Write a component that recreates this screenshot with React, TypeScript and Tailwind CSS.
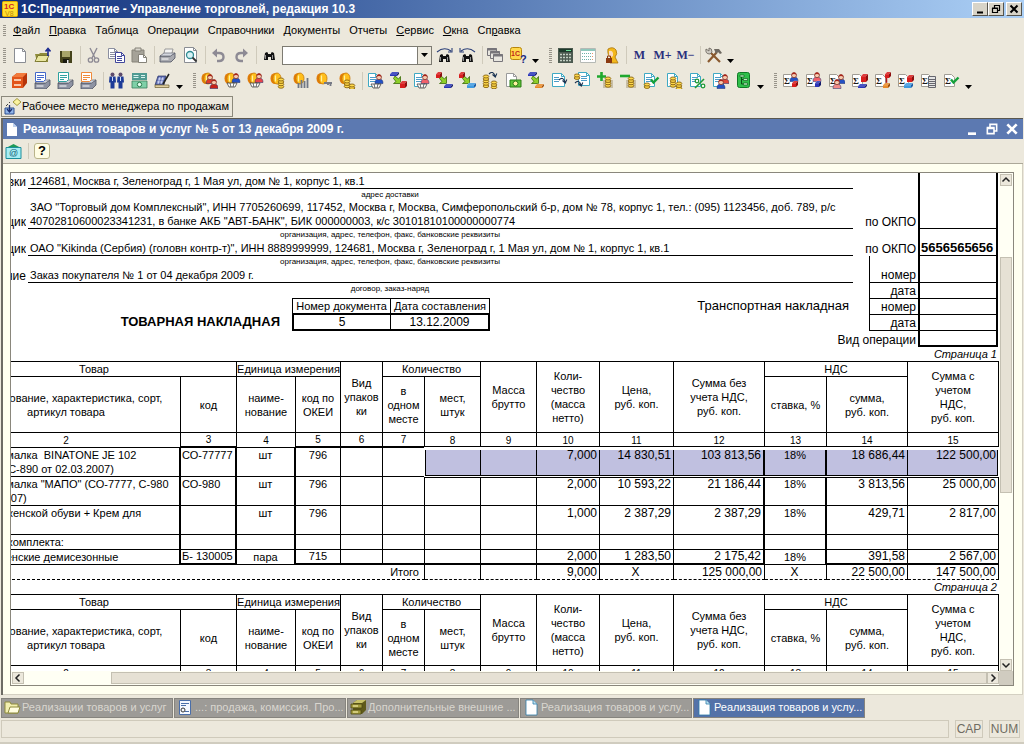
import type { ReactNode } from "react";
import { clsx } from "clsx";

/* ---------- icon parts ---------- */

function Icon({ children }: { children: ReactNode }) {
    return (
        <svg viewBox="0 0 17 17" className="w-[17px] h-[17px] shrink-0" aria-hidden="true">
            {children}
        </svg>
    );
}

function Sheet({ x = 1, y = 1, w = 11, h = 14, c = "#3fa9c4" }) {
    return (
        <g>
            <path d={`M${x + 0.5} ${y + 0.5}h${w - 4}l3 3v${h - 4}h${-(w - 1)}z`} fill="#fff" stroke={c} />
            <path d={`M${x + w - 3.5} ${y + 0.5}v3h3`} fill="none" stroke={c} />
        </g>
    );
}

function Lines({ x = 3, y = 5, w = 6, n = 3, c = "#4d9cc8" }) {
    let d = "";
    for (let i = 0; i < n; i++) d += `M${x} ${y + i * 2 + 0.5}h${w}`;
    return <path d={d} stroke={c} />;
}

function Person({ x = 0, y = 0, c = "#2451c4" }) {
    return (
        <g transform={`translate(${x} ${y})`}>
            <path d="M0 9.500c0-3.500 1.500-4.500 4-4.500s4 1 4 4.500z" fill={c} stroke="#1b2a6b" strokeWidth="0.500" />
            <circle cx="4" cy="3.200" r="2.500" fill="#f6c9ae" stroke="#7a2318" strokeWidth="0.700" />
            <path d="M1.500 3q0.500-2.800 2.500-2.800t2.500 2.800q-2.500-1.800-5 0z" fill="#a8241a" />
        </g>
    );
}

function Coin({ x = 0, y = 0 }) {
    return <ellipse cx={x + 3} cy={y + 1.5} rx="2.800" ry="1.500" fill="#ffd94a" stroke="#8a6410" strokeWidth="0.900" />;
}

function Coins({ x = 0, y = 0, n = 3 }) {
    return (
        <g>
            {Array.from({ length: n }, (_, i) => (
                <Coin key={i} x={x} y={y + (n - 1 - i) * 2.4} />
            ))}
        </g>
    );
}

function BigCoin() {
    return (
        <g>
            <ellipse cx="5" cy="6.500" rx="4.500" ry="5.500" fill="#e07c08" />
            <ellipse cx="7" cy="6.500" rx="4" ry="5.500" fill="#ffbf1c" stroke="#c77808" strokeWidth="0.800" />
            <path d="M5.500 3.500v6" stroke="#fff0a0" strokeWidth="1.200" />
        </g>
    );
}

function Cube({ x = 0, y = 0, w = 6, h = 6, c = "#d81e1e", d = "#8c0f0f" }) {
    return (
        <g transform={`translate(${x} ${y})`}>
            <path d={`M0 2h${w - 2}v${h - 2}h${-(w - 2)}z`} fill={c} />
            <path d={`M0 2l2-2h${w - 2}l-2 2z`} fill={c} stroke="#fff" strokeWidth="0.300" />
            <path d={`M${w - 2} 2l2-2v${h - 2}l-2 2z`} fill={d} />
        </g>
    );
}

function Cart({ x = 0, y = 0 }) {
    return (
        <path
            d={`M${x} ${y}h10l-2 4h-6zM${x + 3} ${y}l1 4M${x + 7} ${y}l-1 4`}
            fill="#fff"
            stroke="#444"
            strokeWidth="0.800"
        />
    );
}

function GreenArrow() {
    return <path d="M5 4l3.500 3 2-2.500v7h-7l2.500-2-2.500-3z" fill="#8ed02a" stroke="#3b6b0a" strokeWidth="0.800" />;
}

function Check({ x = 0, y = 0 }) {
    return <path d={`M${x} ${y + 2.5}l2.500 3 5-5`} fill="none" stroke="#15a03a" strokeWidth="2.400" />;
}

function Turn({ x = 0, y = 0 }) {
    return <path d={`M${x} ${y + 2}q4-4 6 2M${x + 3.5} ${y + 2.5}l2.800 2.500 1.500-3.500`} fill="none" stroke="#1c3452" strokeWidth="1.100" />;
}

function PrinterBody({ y = 9, c = "#8e93a3" }) {
    return (
        <g>
            <path d={`M1 ${y}h10l5-3v5l-4 4h-11z`} fill={c} stroke="#4d5160" strokeWidth="0.800" />
            <path d={`M1 ${y}l4-3h11l-4.500 3z`} fill="#d4d7df" stroke="#4d5160" strokeWidth="0.600" />
            <path d={`M2.500 ${y + 3}h7`} stroke="#fff" />
        </g>
    );
}

function PagePrinter({ c }: { c: string }) {
    return (
        <Icon>
            <PrinterBody y={11} />
            <path d="M1.500 0.500h10v7l-2 2h-8z" fill="#fff" stroke={c} />
            <path d="M3 3.500h7M3 5.500h7M3 7.500h4" stroke={c} />
        </Icon>
    );
}

function SigmaSheet() {
    return (
        <g>
            <path d="M1.500 2.500h7l3 3v9h-10z" fill="#fff" stroke="#a09c94" />
            <text x="2" y="12" fontSize="9" fontWeight="700" fontFamily="Liberation Serif" fill="#1a1a1a">
                Σ
            </text>
        </g>
    );
}

function Binoculars({ dx = 0, dy = 0 }) {
    return (
        <g transform={`translate(${dx} ${dy})`} fill="#111">
            <path d="M3 5l2-1 1 1v7h-4zM12 5l-2-1-1 1v7h4z" />
            <path d="M6 6h3v3h-3z" />
            <path d="M3.500 7v4M10.500 7v4" stroke="#b8b8b8" strokeWidth="0.800" />
        </g>
    );
}

/* ---------- toolbar content ---------- */

type Item = { label: string; icon: ReactNode } | "sep" | "more" | "grip" | "combo";

const gray = "#8d8a94";

const mainBar: Item[] = [
    "grip",
    { label: "Новый", icon: <Icon><Sheet x={3} y={1} w={12} h={15} c="#8a8d93" /></Icon> },
    {
        label: "Открыть",
        icon: (
            <Icon>
                <path d="M1 7h4l1-1h8v9h-11z" fill="#8f8c3a" />
                <path d="M1 14.500l3-6h11l-3 6z" fill="#e9e6a0" stroke="#6d6a20" strokeWidth="0.800" />
                <path d="M14 9v-6M11.500 4.500l2.500-3 2.500 3" fill="none" stroke="#1b2a8f" strokeWidth="1.600" />
            </Icon>
        ),
    },
    {
        label: "Сохранить",
        icon: (
            <Icon>
                <path d="M3 4h12v12h-11l-1-1z" fill="#45431c" />
                <path d="M5 4h8v6h-8z" fill="#a8a56a" />
                <path d="M6 12h6v4h-6z" fill="#1a1a10" />
                <path d="M10 13h1.500v3h-1.500z" fill="#eee" />
            </Icon>
        ),
    },
    "sep",
    {
        label: "Вырезать",
        icon: (
            <Icon>
                <path d="M5 1l5 10M12 1l-5 10" stroke={gray} strokeWidth="1.400" />
                <circle cx="5.500" cy="13" r="2.200" fill="none" stroke={gray} strokeWidth="1.300" />
                <circle cx="11.500" cy="13" r="2.200" fill="none" stroke={gray} strokeWidth="1.300" />
            </Icon>
        ),
    },
    {
        label: "Копировать",
        icon: (
            <Icon>
                <Sheet x={0} y={1} w={10} h={11} c="#8b8fa0" />
                <Lines x={2} y={5} w={5} n={3} c="#8b8fa0" />
                <Sheet x={7} y={5} w={10} h={11} c="#41479c" />
                <Lines x={9} y={9} w={5} n={3} c="#41479c" />
            </Icon>
        ),
    },
    {
        label: "Вставить",
        icon: (
            <Icon>
                <path d="M1 3h12v12h-12z" fill="#a5a298" stroke="#858278" />
                <path d="M4 1h6v3h-6z" fill="#d8d5cc" stroke="#858278" />
                <Sheet x={7} y={7} w={9} h={9} c="#858278" />
            </Icon>
        ),
    },
    "sep",
    { label: "Печать", icon: <Icon><path d="M5 6l1-4h8l-1 4" fill="#f4f4f4" stroke="#999" /><PrinterBody y={9} c="#a9aab0" /></Icon> },
    {
        label: "Просмотр",
        icon: (
            <Icon>
                <Sheet x={2} y={0} w={13} h={16} c="#8a8d93" />
                <circle cx="8" cy="8" r="3.500" fill="#d7f2f5" stroke="#2f8b92" strokeWidth="1.300" />
                <path d="M10.500 10.500l4 4" stroke="#333" strokeWidth="1.800" />
            </Icon>
        ),
    },
    "sep",
    {
        label: "Отменить",
        icon: (
            <Icon>
                <path d="M4 6h5q4.500 0 4.500 4t-4.500 4h-2" fill="none" stroke={gray} strokeWidth="2.400" />
                <path d="M2 6l5-4.500v9z" fill={gray} />
            </Icon>
        ),
    },
    {
        label: "Повторить",
        icon: (
            <Icon>
                <path d="M13 6h-5q-4.500 0-4.500 4t4.500 4h2" fill="none" stroke={gray} strokeWidth="2.400" />
                <path d="M15 6l-5-4.500v9z" fill={gray} />
            </Icon>
        ),
    },
    "sep",
    { label: "Найти", icon: <Icon><Binoculars dx={1} dy={1} /></Icon> },
    "combo",
    {
        label: "Найти далее",
        icon: (
            <Icon>
                <Binoculars dx={1} dy={3} />
                <path d="M1 5q7-6 14-1M12 5h4v-4" fill="none" stroke="#2b3f78" strokeWidth="1.100" />
            </Icon>
        ),
    },
    {
        label: "Найти ранее",
        icon: (
            <Icon>
                <Binoculars dx={1} dy={3} />
                <path d="M16 5q-7-6-14-1M5 5h-4v-4" fill="none" stroke="#2b3f78" strokeWidth="1.100" />
            </Icon>
        ),
    },
    "sep",
    {
        label: "Окна",
        icon: (
            <Icon>
                {[0, 3, 6].map((n) => (
                    <g key={n}>
                        <path d={`M${n + 0.5} ${n + 1.5}h9v7h-9z`} fill="#e8e6e0" stroke="#77757a" />
                        <path d={`M${n} ${n + 2.5}h10`} stroke="#77757a" strokeWidth="2" />
                    </g>
                ))}
            </Icon>
        ),
    },
    {
        label: "Справка",
        icon: (
            <Icon>
                <rect x="0.500" y="0.500" width="11" height="12" rx="2" fill="#ffd84a" stroke="#b8860b" />
                <text x="1" y="9" fontSize="7" fontWeight="700" fontFamily="Liberation Sans" fill="#c0261a">1C</text>
                <text x="10" y="16" fontSize="11" fontWeight="700" fontFamily="Liberation Sans" fill="#1b2a7f">?</text>
            </Icon>
        ),
    },
    "more",
    "grip",
    {
        label: "Калькулятор",
        icon: (
            <Icon>
                <path d="M1 1h15v15h-15z" fill="#4c5a50" />
                <path d="M2 2h13v3h-13z" fill="#1e3b2c" />
                <path d="M3 7.500h11M3 10.500h11M3 13.500h11" stroke="#c4d0c4" strokeWidth="1.600" strokeDasharray="2 1" />
                <path d="M9 3.500h5" stroke="#6fe09a" />
            </Icon>
        ),
    },
    {
        label: "Календарь",
        icon: (
            <Icon>
                <path d="M0.500 1.500h15v14h-15z" fill="#fff" stroke="#b5b9b5" />
                <path d="M1 3h14" stroke="#8fc7bb" strokeWidth="2" />
                <path d="M2 6.500h12M2 9.500h12M2 12.500h12" stroke="#6fb0a8" strokeDasharray="1 1" />
                <path d="M12.500 6v8" stroke="#e59a6a" strokeDasharray="1 2" />
            </Icon>
        ),
    },
    {
        label: "Пользователи",
        icon: (
            <Icon>
                <path d="M5 2q5-3 8 1 2 4-1 7l3 6h-8l1-5q-4-3-3-9z" fill="#f3b81c" stroke="#a8730a" strokeWidth="0.800" />
                <path d="M6 4q3-1 4 2v3q-2 2-4 0z" fill="#fbdcc0" />
                <path d="M3 11h6v5h-6z" fill="#8a3a12" />
                <path d="M4.500 11v-2h3v2" fill="none" stroke="#8a3a12" />
            </Icon>
        ),
    },
    "sep",
    { label: "Память", icon: "M" },
    { label: "Память плюс", icon: "M+" },
    { label: "Память минус", icon: "M−" },
    "sep",
    {
        label: "Настройка",
        icon: (
            <Icon>
                <path d="M3 15l9-10M15 15l-9-9" stroke="#8a5a30" strokeWidth="2.200" />
                <path d="M9 2l5 0 3 4-2 1-2-2-2 2z" fill="#6f6a62" />
                <path d="M1 2q-1 5 4 5l2-2q0-4-3-4v3z" fill="#cfccc4" stroke="#6f6a62" strokeWidth="0.900" />
            </Icon>
        ),
    },
    "more",
];

const tradeBar: Item[] = [
    "grip",
    {
        label: "Справочник",
        icon: (
            <Icon>
                <path d="M1 5l5-4h10v10l-4 5h-11z" fill="#b6340a" />
                <path d="M1 5l5-4h10l-4 4z" fill="#f27a3c" />
                <path d="M1 5h11v11h-11z" fill="#e2551a" />
                <path d="M3 8h7M3 13h7" stroke="#fff0dc" strokeWidth="1.500" />
            </Icon>
        ),
    },
    { label: "Печать ценников", icon: <PagePrinter c="#4468c9" /> },
    { label: "Печать этикеток", icon: <PagePrinter c="#2fa3a0" /> },
    { label: "Печать чеков", icon: <PagePrinter c="#ef8a3a" /> },
    "sep",
    {
        label: "Контрагенты",
        icon: (
            <Icon>
                <path d="M1.500 4.500h6l0.500 6h-1.500v6h-4v-6h-1.500zM9.500 4.500h6l0.500 6h-1.500v6h-4v-6h-1.500z" fill="#1d3b98" />
                <circle cx="4.500" cy="2.500" r="2" fill="#5c4a6c" />
                <circle cx="12.500" cy="2.500" r="2" fill="#5c4a6c" />
                <path d="M4.500 5v4M12.500 5v4" stroke="#cfe0ff" />
            </Icon>
        ),
    },
    {
        label: "Номенклатура",
        icon: (
            <Icon>
                <path d="M1 1h15v7h-15z" fill="#4f9a92" />
                <path d="M2.500 3.500h5M2.500 5.500h5M10 3.500h4M10 5.500h4" stroke="#d8f2ee" />
                <path d="M1 9h15v7h-15z" fill="#7fd0a8" stroke="#3b7d5c" strokeWidth="0.800" />
                <ellipse cx="8.500" cy="12.500" rx="2.200" ry="2.200" fill="#e7fff2" stroke="#2c7a4c" />
            </Icon>
        ),
    },
    {
        label: "Ввод остатков",
        icon: (
            <Icon>
                <path d="M1 13l3-9h8l-2 9z" fill="#5b6bb0" stroke="#2c3568" strokeWidth="0.700" />
                <path d="M3 10h6M4 7h6M6 5l-2 7M9 5l-2 7" stroke="#dfe4ff" strokeWidth="0.800" />
                <path d="M1 13h14v2.500h-14z" fill="#e0cfa0" stroke="#6d5f30" strokeWidth="0.700" />
                <path d="M9 12l6-10" stroke="#222" strokeWidth="1.500" />
            </Icon>
        ),
    },
    "more",
    "grip",
    { label: "Покупатели", icon: <Icon><BigCoin /><Person x={5} y={2} c="#e03a2a" /><Person x={9} y={7} c="#c8221a" /></Icon> },
    { label: "Заказ покупателя", icon: <Icon><BigCoin /><Person x={8} y={1} /><Cart x={3} y={11} /></Icon> },
    { label: "Заказ поставщику", icon: <Icon><BigCoin /><Person x={8} y={1} c="#e8434a" /><Cart x={3} y={11} /></Icon> },
    { label: "Взаиморасчеты", icon: <Icon><BigCoin /><Coins x={8} y={6} n={4} /></Icon> },
    { label: "Продажи", icon: <Icon><BigCoin /><path d="M5.500 16v-5M8.500 16v-8M11.500 16v-7M14.500 16v-10" stroke="#6f7784" strokeWidth="1.800" /></Icon> },
    { label: "Доступ", icon: <Icon><BigCoin /><path d="M8 11h8M14.500 11v3M12 11v2" stroke="#767a86" strokeWidth="1.800" /></Icon> },
    { label: "Касса", icon: <Icon><BigCoin /><Coins x={5} y={8} n={3} /><Coins x={10} y={12} n={2} /></Icon> },
    "sep",
    { label: "Реализация", icon: <Icon><Sheet /><Lines /><Person x={8} y={2} /><Cart x={4} y={12} /></Icon> },
    { label: "Перемещение", icon: <Icon><GreenArrow /><Cube x={0} y={0} w={9} h={4} c="#2b36b8" d="#151c6b" /><Cube x={10} y={9} w={7} h={7} /></Icon> },
    { label: "Поступление", icon: <Icon><Sheet /><Lines /><Person x={8} y={2} c="#f0606a" /><Cart x={4} y={12} /></Icon> },
    { label: "Возврат", icon: <Icon><GreenArrow /><Cube x={0} y={0} w={6} h={6} /><Cube x={8} y={12} w={9} h={4} c="#2b36b8" d="#151c6b" /></Icon> },
    { label: "Списание", icon: <Icon><GreenArrow /><Cube x={0} y={0} w={6} h={6} /><Cube x={8} y={11} w={9} h={5} c="#3f9ae0" d="#1f5fa8" /></Icon> },
    { label: "Корректировка долга", icon: <Icon><Coins x={1} y={3} n={5} /><Coins x={9} y={9} n={3} /><Turn x={7} y={0} /></Icon> },
    {
        label: "Приходный ордер",
        icon: (
            <Icon>
                <Sheet c="#9a9a9a" />
                <path d="M5 8h11v7h-11z" fill="#5cc437" stroke="#2b7a17" />
                <ellipse cx="10.500" cy="11.500" rx="2.500" ry="2.500" fill="#fff3a0" stroke="#2b7a17" />
            </Icon>
        ),
    },
    { label: "Комплектация", icon: <Icon><GreenArrow /><Cube x={0} y={0} w={9} h={4} c="#2b36b8" d="#151c6b" /><Cube x={7} y={12} w={9} h={4} c="#e88a2a" d="#9c4f0d" /></Icon> },
    { label: "Исходящий документ", icon: <Icon><Sheet w={13} /><Lines w={5} /><Turn x={8} y={6} /></Icon> },
    { label: "Входящий документ", icon: <Icon><Sheet x={4} y={0} w={12} /><Lines x={7} w={6} y={4} /><Coins x={0} y={2} n={2} /><Turn x={1} y={9} /></Icon> },
    { label: "Добавить оплату", icon: <Icon><path d="M6 8h10v8h-10z" fill="#c8bfa8" /><path d="M0 4.500h9M4.500 0v9" stroke="#1fa82e" strokeWidth="2.600" /><Coins x={8} y={5} n={4} /></Icon> },
    { label: "Удалить оплату", icon: <Icon><path d="M6 8h10v8h-10z" fill="#c8bfa8" /><path d="M0 4h10" stroke="#1fa82e" strokeWidth="2.600" /><Coins x={8} y={5} n={4} /></Icon> },
    { label: "Провести оплату", icon: <Icon><Sheet /><Lines /><Coins x={1} y={11} n={2} /><Check x={8} y={5} /></Icon> },
    { label: "Счет на оплату", icon: <Icon><Sheet /><Coins x={4} y={5} n={4} /><Coins x={10} y={10} n={3} /></Icon> },
    { label: "Скидки", icon: <Icon><Sheet /><Lines /><path d="M6 16l9-9" stroke="#1f9a38" strokeWidth="1.600" /><circle cx="8" cy="9" r="1.800" fill="#fff" stroke="#1f9a38" strokeWidth="1.300" /><circle cx="14" cy="14" r="1.800" fill="#fff" stroke="#1f9a38" strokeWidth="1.300" /></Icon> },
    { label: "Менеджеры", icon: <Icon><Sheet /><Lines /><Person x={9} y={2} c="#e0473a" /><Person x={5} y={7} /></Icon> },
    {
        label: "Структура",
        icon: (
            <Icon>
                <rect x="2.500" y="0.500" width="12" height="15" rx="2" fill="#2fbf4a" stroke="#0f7a26" />
                <path d="M6.500 4v8h2M6.500 7.500h2" fill="none" stroke="#0b4f18" />
                <path d="M5 3h4v2h-4zM8.500 6.500h4v2h-4zM8.500 11h4v2h-4z" fill="#b9f2c0" stroke="#0b4f18" strokeWidth="0.600" />
            </Icon>
        ),
    },
    "more",
    "grip",
    { label: "Отчет по покупателям", icon: <Icon><SigmaSheet /><Person x={8} y={0} /><Cube x={10} y={9} w={6} h={6} /></Icon> },
    { label: "Отчет по поставщикам", icon: <Icon><SigmaSheet /><Person x={8} y={0} c="#f0606a" /><Cube x={10} y={9} w={6} h={6} c="#2b36b8" d="#151c6b" /></Icon> },
    { label: "Отчет по контрагентам", icon: <Icon><SigmaSheet /><Person x={9} y={2} /><Person x={5} y={7} c="#f28a8a" /></Icon> },
    { label: "Отчет о продажах", icon: <Icon><SigmaSheet /><Cube x={10} y={2} w={7} h={8} /><Cube x={7} y={12} w={9} h={4} c="#2b36b8" d="#151c6b" /></Icon> },
    { label: "Отчет о закупках", icon: <Icon><SigmaSheet /><Cube x={11} y={0} w={6} h={6} /><path d="M12.500 6v5" stroke="#b01818" strokeWidth="1.500" /><Cube x={9} y={11} w={7} h={5} c="#e88a2a" d="#9c4f0d" /></Icon> },
    { label: "Отчет по складу", icon: <Icon><SigmaSheet /><Cube x={10} y={3} w={7} h={7} /><Cube x={7} y={11} w={9} h={5} c="#3f9ae0" d="#1f5fa8" /></Icon> },
    { label: "Ведомость", icon: <Icon><SigmaSheet /><path d="M8.500 4.500h7v11h-7z" fill="#e4e4e4" stroke="#66666e" /><path d="M9 7.500h6M9 9.500h6M9 11.500h6M9 13.500h6" stroke="#66666e" /></Icon> },
    { label: "Проверка", icon: <Icon><SigmaSheet /><Check x={8} y={5} /></Icon> },
    "more",
];

function Toolbar({ items }: { items: Item[] }) {
    return (
        <>
            {items.map((item, i) => {
                if (item === "sep") return <span key={i} className="w-[5px] h-[18px] shrink-0 border-r border-[#cfcabb] mr-px -ml-px" />;
                if (item === "more")
                    return (
                        <button key={i} aria-label="Еще" className="w-[11px] h-4 shrink-0 flex items-end justify-center">
                            <svg viewBox="0 0 7 4" className="w-[7px] h-1"><path d="M0 0h7l-3.500 4z" fill="#000" /></svg>
                        </button>
                    );
                if (item === "grip")
                    return (
                        <span key={i} className={clsx("w-2 shrink-0 flex flex-col items-center gap-px", i > 0 && "ml-[5px]")}>
                            {Array.from({ length: 8 }, (_, n) => (
                                <span key={n} className="w-[3px] h-px bg-[#98948a]" />
                            ))}
                        </span>
                    );
                if (item === "combo")
                    return (
                        <span key={i} className="relative mx-px shrink-0">
                            <select aria-label="Поиск" className="block appearance-none w-[150px] h-[19px] bg-white border border-[#7d7b72]">
                                <option></option>
                            </select>
                            <span className="pointer-events-none absolute right-px top-px bottom-px w-[14px] flex items-center justify-center bg-[#ece8dc] border-l border-[#7d7b72]">
                                <svg viewBox="0 0 7 4" className="w-[7px] h-1"><path d="M0 0h7l-3.500 4z" fill="#000" /></svg>
                            </span>
                        </span>
                    );
                return (
                    <button
                        key={i}
                        aria-label={item.label}
                        className="w-[23px] h-[22px] shrink-0 flex items-center justify-center font-['Liberation_Serif',serif] font-bold text-[12px] text-[#2a2f7c]"
                    >
                        {item.icon}
                    </button>
                );
            })}
        </>
    );
}

/* ---------- title and menu ---------- */

const menu: [string, string, string][] = [
    ["", "Ф", "айл"],
    ["", "П", "равка"],
    ["Таблица", "", ""],
    ["Операции", "", ""],
    ["Справочники", "", ""],
    ["Документы", "", ""],
    ["Отчеты", "", ""],
    ["", "С", "ервис"],
    ["", "О", "кна"],
    ["Сп", "р", "авка"],
];

const winGlyphs = {
    min: "M3 8.500h6",
    restore: "M4.500 4v-2.500h5v5h-2M2.500 4.500h5v4h-5zM2 4h6M4 1.500h6",
    close: "M2.500 1.500l7 7M9.500 1.500l-7 7",
};

function WindowButton({ kind, label, flat }: { kind: keyof typeof winGlyphs; label: string; flat?: boolean }) {
    return (
        <button
            aria-label={label}
            className={clsx(
                "flex items-center justify-center",
                flat
                    ? "w-5 h-4 text-white"
                    : "w-4 h-[14px] bg-[#d8d4c8] text-black border border-t-white border-l-white border-r-[#55534c] border-b-[#55534c]",
            )}
        >
            <svg viewBox="0 0 12 10" className={flat ? "w-4 h-[14px]" : "w-3 h-[10px]"}>
                <path d={winGlyphs[kind]} fill="none" stroke="currentColor" strokeWidth={kind === "restore" ? 1.2 : 2} />
            </svg>
        </button>
    );
}

/* ---------- invoice ---------- */

function Requisite({ label, caption, gap, children }: { label: string; caption: string; gap: string; children: ReactNode }) {
    return (
        <div className="text-[11px] leading-[14px]">
            <div className="flex items-end">
                <div className="w-[15px] mr-[2px] flex justify-end overflow-hidden text-[12px]">{label}</div>
                <div className="flex-1 min-w-0 pl-[2px] border-b border-black whitespace-nowrap">{children}</div>
            </div>
            <div className={clsx("pl-[10px] pr-[94px] text-center text-[8px] leading-[11px]", gap)}>{caption}</div>
        </div>
    );
}

function CodeRow({ label, boxed, className, children }: { label: string; boxed?: boolean; className: string; children?: ReactNode }) {
    return (
        <div className={clsx("flex justify-end", className)}>
            <div className={clsx("flex items-end justify-end pr-[2px] whitespace-nowrap", boxed ? "w-[49px] border-l border-b border-black" : "w-[65px]")}>
                {label}
            </div>
            <div className="w-20 flex items-end pl-px border-x-2 border-b border-black font-bold text-[13px]">{children}</div>
        </div>
    );
}

const cell = "border-r border-b border-black p-0 font-normal";
const thick = "border-b-2 leading-[13px]";

function GoodsCols() {
    return (
        <colgroup>
            <col />
            <col className="w-[56px]" />
            <col className="w-[59px]" />
            <col className="w-[45px]" />
            <col className="w-[42px]" />
            <col className="w-[42px]" />
            <col className="w-[56px]" />
            <col className="w-[56px]" />
            <col className="w-[63px]" />
            <col className="w-[74px]" />
            <col className="w-[91px]" />
            <col className="w-[62px]" />
            <col className="w-[81px]" />
            <col className="w-[91px]" />
        </colgroup>
    );
}

function GoodsHead({ open }: { open?: boolean }) {
    const top = clsx(cell, "border-t");
    return (
        <thead className="text-[11px]">
            <tr className="h-4 whitespace-nowrap">
                <th colSpan={2} className={top}>Товар</th>
                <th colSpan={2} className={top}>Единица измерения</th>
                <th rowSpan={2} className={top}>Вид<br />упаков<br />ки</th>
                <th colSpan={2} className={top}>Количество</th>
                <th rowSpan={2} className={top}>Масса<br />брутто</th>
                <th rowSpan={2} className={top}>Коли-<br />чество<br />(масса<br />нетто)</th>
                <th rowSpan={2} className={top}>Цена,<br />руб. коп.</th>
                <th rowSpan={2} className={top}>Сумма без<br />учета НДС,<br />руб. коп.</th>
                <th colSpan={2} className={top}>НДС</th>
                <th rowSpan={2} className={top}>Сумма с<br />учетом<br />НДС,<br />руб. коп.</th>
            </tr>
            <tr className="h-14 whitespace-nowrap">
                <th className={cell}>Наименование, характеристика, сорт,<br />артикул товара</th>
                <th className={cell}>код</th>
                <th className={cell}>наиме-<br />нование</th>
                <th className={cell}>код по<br />ОКЕИ</th>
                <th className={cell}>в<br />одном<br />месте</th>
                <th className={cell}>мест,<br />штук</th>
                <th className={cell}>ставка, %</th>
                <th className={cell}>сумма,<br />руб. коп.</th>
            </tr>
            <tr className="h-[15px] text-[10px] leading-[13px]">
                {[2, 3, 4, 5, 6, 7, 8, 9, 10, 11, 12, 13, 14, 15].map((n) => (
                    <th key={n} className={clsx(cell, !open && (n === 3 || (n > 4 && n < 8)) && "border-b-2")}>{n}</th>
                ))}
            </tr>
        </thead>
    );
}

const goods = [
    { name: ["Соковыжималка  BINATONE JE 102", "(СО-7777, С-890 от 02.03.2007)"], code: "СО-77777", unit: "шт", okei: "796", qty: "7,000", price: "14 830,51", net: "103 813,56", rate: "18%", vat: "18 686,44", total: "122 500,00" },
    { name: ["Соковыжималка \"МАПО\" (СО-7777, С-980", "от 02.03.2007)"], code: "СО-980", unit: "шт", okei: "796", qty: "2,000", price: "10 593,22", net: "21 186,44", rate: "18%", vat: "3 813,56", total: "25 000,00" },
    { name: ["Комплект женской обуви + Крем для", ""], code: "", unit: "шт", okei: "796", qty: "1,000", price: "2 387,29", net: "2 387,29", rate: "18%", vat: "429,71", total: "2 817,00" },
    { name: ["Единица   комплекта:"], code: "", unit: "", okei: "", qty: "", price: "", net: "", rate: "", vat: "", total: "" },
    { name: ["Ботинки женские демисезонные"], code: "Б- 130005", unit: "пара", okei: "715", qty: "2,000", price: "1 283,50", net: "2 175,42", rate: "18%", vat: "391,58", total: "2 567,00" },
];

function GoodsTable() {
    return (
        <table className="w-full table-fixed border-separate border-spacing-0">
            <GoodsCols />
            <GoodsHead />
            <tbody className="align-top whitespace-nowrap">
                {goods.map((g, i) => {
                    const last = i === goods.length - 1 && thick;
                    const sel = i === 0 && "bg-[#c0c0e0]";
                    const num = clsx(cell, "text-right pr-[2px]");
                    return (
                        <tr key={i} className={g.name.length > 1 ? "h-[29px]" : "h-[15px]"}>
                            <td className={clsx(cell, "pl-[2px] text-[11px] border-r-2 whitespace-pre")}>{g.name.join("\n")}</td>
                            <td className={clsx(cell, last, "pl-px text-[11px] border-r-2")}>{g.code}</td>
                            <td className={clsx(cell, "text-center text-[11px] border-r-2")}>{g.unit}</td>
                            <td className={clsx(cell, last, "text-center text-[11px]")}>{g.okei}</td>
                            <td className={clsx(cell, last)}></td>
                            <td className={clsx(cell, last)}></td>
                            <td className={clsx(cell, last, sel)}></td>
                            <td className={clsx(cell, last, sel)}></td>
                            <td className={clsx(num, last, sel)}>{g.qty}</td>
                            <td className={clsx(num, last, sel)}>{g.price}</td>
                            <td className={clsx(num, last, sel, "border-r-2")}>{g.net}</td>
                            <td className={clsx(cell, sel, "text-center text-[11px] border-r-2")}>{g.rate}</td>
                            <td className={clsx(num, last, sel)}>{g.vat}</td>
                            <td className={clsx(num, last, sel)}>{g.total}</td>
                        </tr>
                    );
                })}
                <tr className="h-[15px] text-right [&>td]:border-r [&>td]:border-b [&>td]:border-black [&>td]:[border-bottom-style:dashed] [&>td]:pr-[2px]">
                    <td colSpan={6} className="text-[11px]"><span className="mr-[3px]">Итого</span></td>
                    <td></td>
                    <td></td>
                    <td>9,000</td>
                    <td className="text-center">X</td>
                    <td>125 000,00</td>
                    <td className="text-center">X</td>
                    <td>22 500,00</td>
                    <td>147 500,00</td>
                </tr>
            </tbody>
        </table>
    );
}

function Invoice() {
    return (
        <div className="overflow-hidden min-h-0 bg-white text-black text-[12px] leading-[14px] font-['Liberation_Sans',sans-serif]">
            <div className="flex">
                <div className="flex-1 min-w-0 pt-px">
                    <Requisite label="доставки" caption="адрес доставки" gap="h-[11px]">124681, Москва г, Зеленоград г, 1 Мая ул, дом № 1, корпус 1, кв.1</Requisite>
                    <Requisite label="Поставщик" caption="организация, адрес, телефон, факс, банковские реквизиты" gap="h-3">
                        ЗАО "Торговый дом Комплексный", ИНН 7705260699, 117452, Москва г, Москва, Симферопольский б-р, дом № 78, корпус 1, тел.: (095) 1123456, доб. 789, р/с
                        <br />
                        40702810600023341231, в банке АКБ "АВТ-БАНК", БИК 000000003, к/с 30101810100000000774
                    </Requisite>
                    <Requisite label="Плательщик" caption="организация, адрес, телефон, факс, банковские реквизиты" gap="h-3">
                        ОАО "Kikinda (Сербия) (головн контр-т)", ИНН 8889999999, 124681, Москва г, Зеленоград г, 1 Мая ул, дом № 1, корпус 1, кв.1
                    </Requisite>
                    <Requisite label="Основание" caption="договор, заказ-наряд" gap="h-[15px]">Заказ покупателя № 1 от 04 декабря 2009 г.</Requisite>
                    <div className="flex">
                        <h1 className="w-[281px] pr-3 pt-[17px] text-right text-[13px] font-bold whitespace-nowrap">ТОВАРНАЯ НАКЛАДНАЯ</h1>
                        <table className="w-[198px] table-fixed border-separate border-spacing-0 text-center whitespace-nowrap">
                            <thead className="text-[11px]">
                                <tr className="h-4">
                                    <th className="border border-black p-0 font-normal">Номер документа</th>
                                    <th className="border border-l-0 border-black p-0 font-normal">Дата составления</th>
                                </tr>
                            </thead>
                            <tbody>
                                <tr className="h-[17px]">
                                    <td className="border-x border-l-2 border-t border-b-2 border-black p-0">5</td>
                                    <td className="border-r-2 border-t border-b-2 border-black p-0">13.12.2009</td>
                                </tr>
                            </tbody>
                        </table>
                        <div className="flex-1 pr-1 text-right text-[13px] leading-4">Транспортная накладная</div>
                    </div>
                </div>
                <div className="mr-px w-[145px]">
                    <CodeRow label="по ОКПО" className="h-14" />
                    <CodeRow label="по ОКПО" className="h-[27px]">5656565656</CodeRow>
                    <CodeRow label="номер" boxed className="h-[27px]" />
                    <CodeRow label="дата" boxed className="h-4" />
                    <CodeRow label="номер" boxed className="h-4" />
                    <CodeRow label="дата" boxed className="h-4" />
                    <CodeRow label="Вид операции" className="h-4 [&>div:last-child]:border-b-2" />
                </div>
            </div>
            <div className="h-[14px] pr-[2px] text-right text-[11px] italic">Страница 1</div>
            {/* the sheet is scrolled to the right by a part of the first column */}
            <div className="relative -ml-[59px]">
                <GoodsTable />
                {/* frame of the selected cells */}
                <div className="absolute left-[472px] right-0 top-[85px] h-8 border-y border-black">
                    <div className="h-full border border-t-[3px] border-white">
                        <div className="h-full border border-t-0 border-black"></div>
                    </div>
                </div>
                <div className="h-[14px] pr-[2px] text-right text-[11px] italic">Страница 2</div>
                <table className="w-full table-fixed border-separate border-spacing-0">
                    <GoodsCols />
                    <GoodsHead open />
                </table>
            </div>
        </div>
    );
}

function ScrollButton({ label, d }: { label: string; d: string }) {
    return (
        <button aria-label={label} className="w-3 h-3 shrink-0 flex items-center justify-center bg-[#ece8dc] border border-[#c4c0b2]">
            <svg viewBox="0 0 10 10" className="w-[10px] h-[10px]"><path d={d} fill="none" stroke="#222" strokeWidth="1.500" /></svg>
        </button>
    );
}

/* ---------- window list ---------- */

const folderIcon = (
    <Icon>
        <path d="M1 3h5l1 2h7v9h-13z" fill="#f2efb0" stroke="#8d8a3c" />
        <path d="M4 14l2-6h10l-2 6z" fill="#fffde0" stroke="#8d8a3c" />
    </Icon>
);
const reportIcon = (
    <Icon>
        <path d="M2.500 1.500h11v14h-11z" fill="#f4f8ff" stroke="#4a6ea8" />
        <path d="M4 4.500h8M4 6.500h5M8 12.500h4" stroke="#4a6ea8" />
        <circle cx="6" cy="11" r="2" fill="none" stroke="#333" />
    </Icon>
);
const cabinetIcon = (
    <Icon>
        <path d="M3 4l4-3h9v10l-4 4h-9z" fill="#5f5a1a" />
        <path d="M3 4l4-3h9l-4 3z" fill="#c9c36a" />
        <path d="M1 5h11v4h-11zM1 11h10v4h-10z" fill="#a39c3c" stroke="#4b4612" strokeWidth="0.800" />
        <path d="M3 7h5M3 13h5" stroke="#fff8b8" />
    </Icon>
);
const documentIcon = (
    <Icon>
        <path d="M3 1h7l4 4v11h-11z" fill="#fff" stroke="#2f7ca8" strokeWidth="0.800" />
        <path d="M10 1v4h4" fill="#bfe3f2" stroke="#2f7ca8" strokeWidth="0.800" />
    </Icon>
);

const openWindows = [
    { title: "Реализации товаров и услуг", icon: folderIcon },
    { title: "...: продажа, комиссия. Про...", icon: reportIcon },
    { title: "Дополнительные внешние ...", icon: cabinetIcon },
    { title: "Реализация товаров и услу...", icon: documentIcon },
    { title: "Реализация товаров и услу...", icon: documentIcon, active: true },
];

export default function App() {
    return (
        <div className="h-screen flex flex-col overflow-hidden bg-[#ece8dc] text-black text-[11px] font-['Liberation_Sans',sans-serif]">
            <header className="h-[18px] shrink-0 flex items-center pl-[2px] pr-[2px] bg-linear-to-r from-[#12307c] via-[#5c7fb8] to-[#acd0f6] text-white">
                <svg viewBox="0 0 16 16" className="w-4 h-4" aria-hidden="true">
                    <rect x="0.500" y="0.500" width="15" height="15" rx="1" fill="#ffdf2e" stroke="#e0a800" />
                    <text x="2" y="8" fontSize="8" fontWeight="700" fontFamily="Liberation Sans" fill="#d3222a">1С</text>
                    <text x="3" y="15" fontSize="7" fontFamily="Liberation Sans" fill="#c08a10">V8</text>
                </svg>
                <h2 className="flex-1 pl-[3px] text-[12px] font-bold whitespace-nowrap">1С:Предприятие - Управление торговлей, редакция 10.3</h2>
                <WindowButton kind="min" label="Свернуть" />
                <WindowButton kind="restore" label="Восстановить" />
                <span className="w-[2px]" />
                <WindowButton kind="close" label="Закрыть" />
            </header>

            <nav className="h-[25px] shrink-0 flex items-center gap-[9px] pl-[3px]">
                <span className="w-[3px] mr-[-2px] flex flex-col gap-px">
                    {Array.from({ length: 6 }, (_, n) => (
                        <span key={n} className="h-px bg-[#98948a]" />
                    ))}
                </span>
                {menu.map(([before, key, after], i) => (
                    <button key={i}>
                        {before}<span className="underline">{key}</span>{after}
                    </button>
                ))}
            </nav>

            <div className="h-6 shrink-0 flex items-center"><Toolbar items={mainBar} /></div>
            <div className="h-[27px] shrink-0 flex items-center"><Toolbar items={tradeBar} /></div>

            <div className="h-6 shrink-0 flex items-center pl-px">
                <button className="h-[21px] flex items-center gap-px pl-[2px] pr-[3px] border border-[#8c897c] whitespace-nowrap">
                    <Icon>
                        <path d="M1 10h9v6h-9z" fill="#8fb4e8" stroke="#2c4f90" />
                        <path d="M5.500 7v6M3 11l2.500 3 2.500-3" fill="none" stroke="#1c2f70" strokeWidth="1.300" />
                        <path d="M9 4l4-3.500 4 3.500-4 3.500z" fill="#fbf3a0" stroke="#8d8420" strokeWidth="0.800" />
                        <path d="M2 8l2-2M5 5l1-1" stroke="#444" />
                    </Icon>
                    Рабочее место менеджера по продажам
                </button>
            </div>

            <main className="flex-1 min-h-0 ml-px mr-px flex flex-col border-t border-l-2 border-[#5a5850] border-l-[#6d6b64]">
                <div className="h-5 shrink-0 flex items-center pr-px bg-[#5c79b1] text-white">
                    <Icon><path d="M4 2h6l4 4v9h-10z" fill="#fff" /><path d="M10 2v4h4" fill="#bcd0ee" /></Icon>
                    <h2 className="flex-1 pl-[3px] text-[12px] font-bold whitespace-nowrap">Реализация товаров и услуг № 5 от 13 декабря 2009 г.</h2>
                    <WindowButton kind="min" label="Свернуть окно" flat />
                    <WindowButton kind="restore" label="Восстановить окно" flat />
                    <WindowButton kind="close" label="Закрыть окно" flat />
                </div>
                <div className="h-[25px] shrink-0 flex items-center pl-[2px] border-b border-[#aca899]">
                    <button aria-label="Отправить по почте">
                        <Icon>
                            <path d="M1 5l7.500-4 7.500 4z" fill="#1d9a58" />
                            <path d="M1 4.500h15v11h-15z" fill="#a8eef4" stroke="#1c8f9c" />
                            <text x="4" y="13" fontSize="9" fontFamily="Liberation Sans" fill="#145f78">@</text>
                        </Icon>
                    </button>
                    <span className="w-[7px] h-4 mr-[5px] border-r border-[#cfcabb]" />
                    <button aria-label="Помощь" className="w-4 h-4 flex items-center justify-center rounded-[3px] border border-[#b9b48a] bg-[#fffde4] font-bold text-[13px]">?</button>
                </div>

                <div className="flex-1 min-h-0 p-2 pl-[7px] flex bg-[#fffff0] border-b border-r border-[#d4d0c2]">
                    <div className="flex-1 min-w-0 grid grid-cols-[minmax(0,1fr)_14px] grid-rows-[minmax(0,1fr)_14px] border border-[#8a877c] bg-[#fffff4]">
                        <Invoice />
                        <div className="flex flex-col items-center pt-px min-h-0">
                            <ScrollButton label="Вверх" d="M1.500 6.500l3.500-3.500 3.500 3.500" />
                            <div className="flex-1 w-3 flex flex-col">
                                <div className="basis-[15%]" />
                                <div className="basis-1/2 bg-[#e6e1d4] border border-[#c4c0b2]" />
                            </div>
                            <ScrollButton label="Вниз" d="M1.500 3.500l3.500 3.500 3.500-3.500" />
                        </div>
                        <div className="flex items-center pl-px">
                            <ScrollButton label="Влево" d="M6.500 1.500l-3.500 3.500 3.500 3.500" />
                            <div className="flex-1 h-3 flex justify-end">
                                <div className="basis-[91%] bg-[#e6e1d4] border border-[#c4c0b2]" />
                            </div>
                            <ScrollButton label="Вправо" d="M3.500 1.500l3.500 3.500-3.500 3.500" />
                        </div>
                        <div className="bg-[#d0ccc0]" />
                    </div>
                </div>
            </main>

            <div className="h-6 shrink-0 flex items-center gap-px pl-px pt-px">
                {openWindows.map((w, i) => (
                    <button
                        key={i}
                        className={clsx(
                            "w-[172px] h-5 flex items-center gap-px pl-[2px] border border-[#86847e] whitespace-nowrap overflow-hidden",
                            w.active ? "bg-[#5472a8] text-white" : "bg-[#9d9b97] text-[#d9d6cf]",
                        )}
                    >
                        {w.icon}
                        {w.title}
                    </button>
                ))}
            </div>

            <footer className="h-[25px] shrink-0 flex gap-[6px] pt-px pb-1 pl-px pr-1 text-[12px] text-[#6f6c62] border-b-2 border-[#d0ccbf]">
                <div className="flex-1 border border-[#cfcabb]" />
                <div className="w-7 flex items-center justify-center border border-[#cfcabb]">CAP</div>
                <div className="w-[31px] flex items-center justify-center border border-[#cfcabb]">NUM</div>
            </footer>
        </div>
    );
}
